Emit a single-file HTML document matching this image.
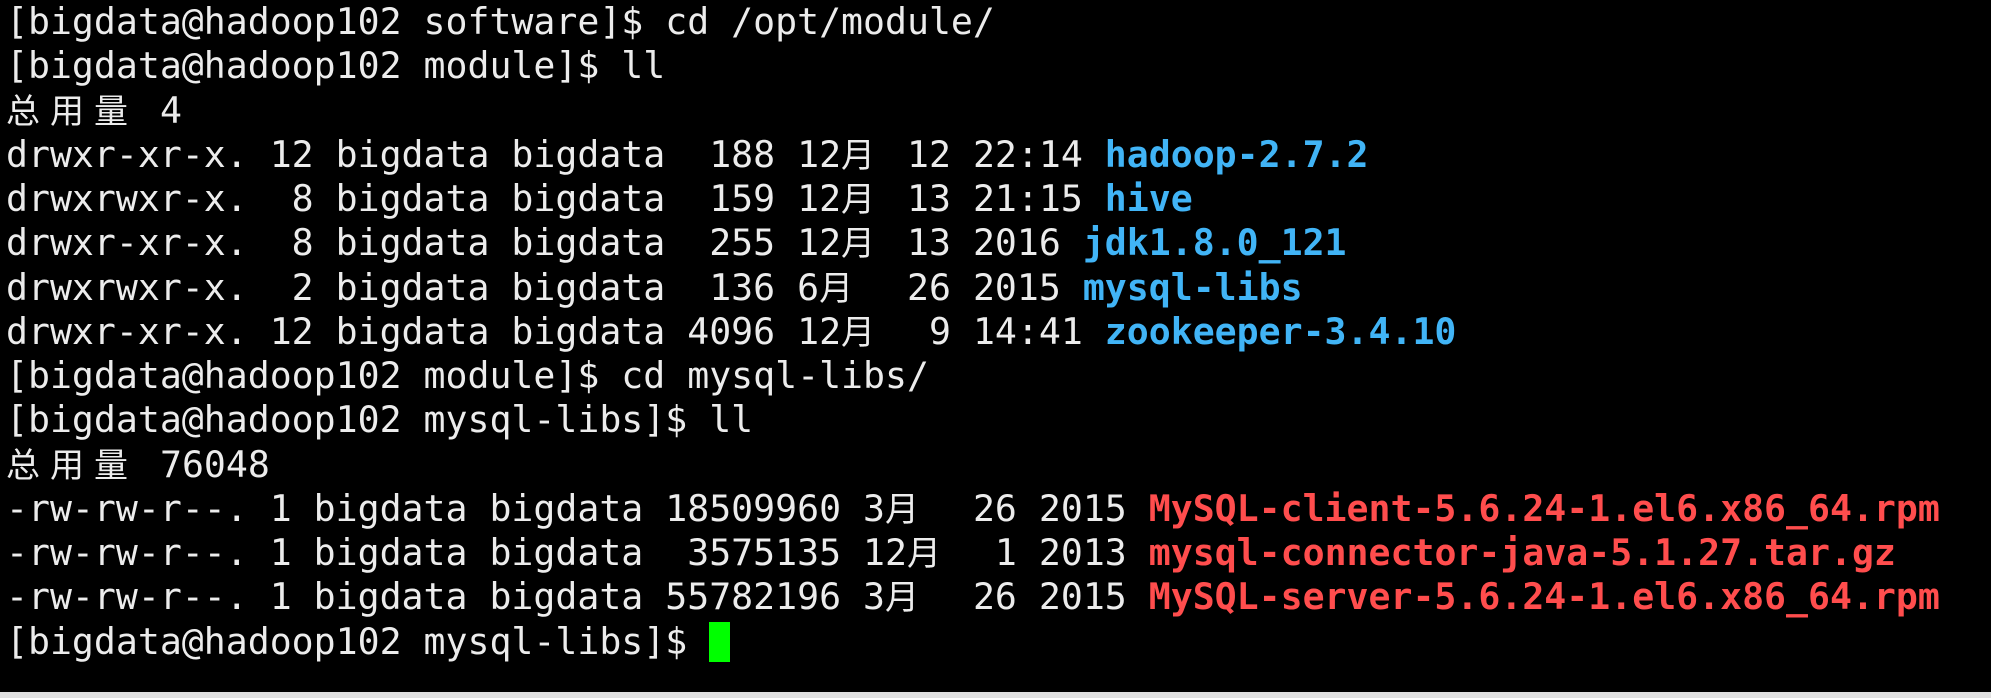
<!DOCTYPE html>
<html><head><meta charset="utf-8"><style>
html,body{margin:0;padding:0;background:#000;width:1991px;height:698px;overflow:hidden}
pre{margin:0;padding:0 0 0 6px;font-family:"DejaVu Sans Mono","Liberation Mono","Noto Sans CJK SC",monospace;font-size:36.5px;line-height:44.26px;color:#ececec;white-space:pre}
.c{display:inline-block;width:44px;font-family:"Noto Sans CJK SC","WenQuanYi Zen Hei",sans-serif;font-size:34px;line-height:1;text-align:left}
.b{color:#41b4f6;font-weight:bold}
.r{color:#ff4d4d;font-weight:bold}
.cur{display:inline-block;width:21px;height:40px;background:#00ff00;vertical-align:-8px}
.bar{position:absolute;left:0;top:692px;width:1991px;height:6px;background:#e0e0e0}
</style></head><body>
<pre>[bigdata@hadoop102 software]$ cd /opt/module/
[bigdata@hadoop102 module]$ ll
<span class="c">总</span><span class="c">用</span><span class="c">量</span> 4
drwxr-xr-x. 12 bigdata bigdata  188 12<span class="c">月</span> 12 22:14 <span class="b">hadoop-2.7.2</span>
drwxrwxr-x.  8 bigdata bigdata  159 12<span class="c">月</span> 13 21:15 <span class="b">hive</span>
drwxr-xr-x.  8 bigdata bigdata  255 12<span class="c">月</span> 13 2016 <span class="b">jdk1.8.0_121</span>
drwxrwxr-x.  2 bigdata bigdata  136 6<span class="c">月</span>  26 2015 <span class="b">mysql-libs</span>
drwxr-xr-x. 12 bigdata bigdata 4096 12<span class="c">月</span>  9 14:41 <span class="b">zookeeper-3.4.10</span>
[bigdata@hadoop102 module]$ cd mysql-libs/
[bigdata@hadoop102 mysql-libs]$ ll
<span class="c">总</span><span class="c">用</span><span class="c">量</span> 76048
-rw-rw-r--. 1 bigdata bigdata 18509960 3<span class="c">月</span>  26 2015 <span class="r">MySQL-client-5.6.24-1.el6.x86_64.rpm</span>
-rw-rw-r--. 1 bigdata bigdata  3575135 12<span class="c">月</span>  1 2013 <span class="r">mysql-connector-java-5.1.27.tar.gz</span>
-rw-rw-r--. 1 bigdata bigdata 55782196 3<span class="c">月</span>  26 2015 <span class="r">MySQL-server-5.6.24-1.el6.x86_64.rpm</span>
[bigdata@hadoop102 mysql-libs]$ <span class="cur"></span></pre>
<div class="bar"></div>
</body></html>
